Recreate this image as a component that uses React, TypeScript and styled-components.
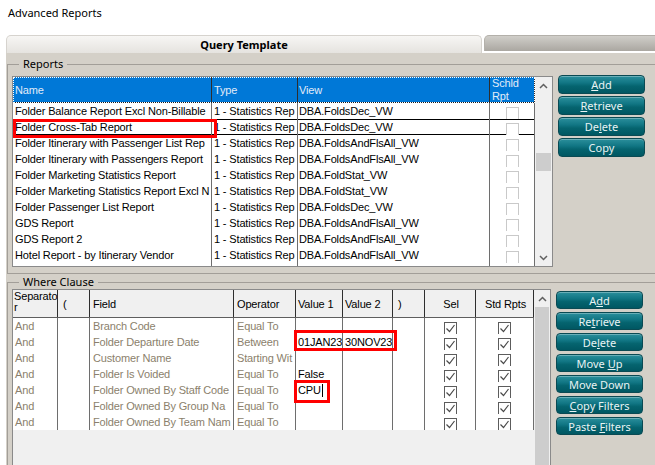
import React from "react";
import styled, { createGlobalStyle } from "styled-components";

const GlobalStyle = createGlobalStyle`
  html, body { margin: 0; padding: 0; background: #ffffff; }
  body { font-family: "Liberation Sans", Arial, sans-serif; }
  * { box-sizing: border-box; }
`;

const UI = `"Noto Sans", "Open Sans", sans-serif`;

const Window = styled.div`
  width: 655px;
  height: 465px;
  overflow: hidden;
  background: #ffffff;
  display: flex;
  flex-direction: column;
`;

const Title = styled.div`
  height: 35px;
  flex: none;
  padding: 5px 0 0 8px;
  font-family: ${UI};
  font-size: 11px;
  line-height: 16px;
  color: #000;
`;

const TabStrip = styled.div`
  display: flex;
  flex: none;
  height: 18px;
  padding-left: 6px;
  gap: 2px;
  align-items: flex-start;
`;

const Tab = styled.div<{ $active?: boolean }>`
  flex: ${(p) => (p.$active ? "0 0 476px" : "1 1 auto")};
  height: ${(p) => (p.$active ? "18px" : "16px")};
  margin-right: ${(p) => (p.$active ? "0" : "-10px")};
  border: 1px solid ${(p) => (p.$active ? "#d6d3ce" : "#b3b0aa")};
  border-bottom: none;
  border-radius: ${(p) => (p.$active ? "5px 5px 0 0" : "5px 0 0 0")};
  background: ${(p) =>
    p.$active
      ? "linear-gradient(#f7f6f4, #e5e3df)"
      : "linear-gradient(#d0cec9, #aaa7a1)"};
  display: flex;
  align-items: center;
  justify-content: center;
  font-family: ${UI};
  font-weight: 700;
  font-size: 11px;
  color: #000;
`;

const Panel = styled.div`
  flex: 1;
  margin-left: 6px;
  background: #d4d0c8;
  padding-top: 4px;
  display: flex;
  flex-direction: column;
  gap: 1px;
  min-height: 0;
`;

const Group = styled.fieldset<{ $pt: number; $pb: number }>`
  margin: 0 -30px 0 1px;
  padding: ${(p) => p.$pt}px 0 ${(p) => p.$pb}px 4px;
  border: 1px solid #a29e98;
  border-right: none;
  min-width: 0;
  flex: none;
`;

const Legend = styled.legend`
  margin-left: 7px;
  padding: 0 4px;
  font-family: ${UI};
  font-size: 11px;
  line-height: 14px;
  color: #000;
`;

const GroupBody = styled.div`
  display: flex;
  gap: 5px;
  align-items: flex-start;
`;

const GridFrame = styled.div<{ $w: number; $h: number }>`
  width: ${(p) => p.$w}px;
  height: ${(p) => p.$h}px;
  flex: none;
  border: 1px solid #8a8a8a;
  background: #ffffff;
  display: flex;
`;

const TableArea = styled.div<{ $bg: string }>`
  flex: 1;
  position: relative;
  background: ${(p) => p.$bg};
  display: flex;
  flex-direction: column;
  overflow: hidden;
  letter-spacing: -0.15px;
`;

const HeadRow = styled.div<{ $cols: string; $h: number; $blue?: boolean }>`
  display: grid;
  grid-template-columns: ${(p) => p.$cols};
  height: ${(p) => p.$h}px;
  flex: none;
  background: ${(p) => (p.$blue ? "#0078d7" : "#f0f0f0")};
  border-bottom: 1px solid ${(p) => (p.$blue ? "#1a1a1a" : "#5e5e5e")};
  color: ${(p) => (p.$blue ? "#e2ecf9" : "#000000")};
  ${(p) => (p.$blue ? "outline: 1px dotted #ffffff; outline-offset: -1px;" : "")}
`;

const HeadCell = styled.div<{ $center?: boolean; $top?: boolean; $pad?: number }>`
  border-right: 1px solid #2e2e2e;
  padding-left: ${(p) => (p.$pad ?? 2)}px;
  padding-top: ${(p) => (p.$top ? "1px" : "1px")};
  display: flex;
  align-items: ${(p) => (p.$top ? "flex-start" : "center")};
  justify-content: ${(p) => (p.$center ? "center" : "flex-start")};
  font-size: 11px;
  line-height: ${(p) => (p.$top ? "11px" : "13px")};
  overflow: hidden;
`;

const Row = styled.div<{ $cols: string; $current?: boolean; $fill?: boolean }>`
  display: grid;
  grid-template-columns: ${(p) => p.$cols};
  height: ${(p) => (p.$fill ? "auto" : "16px")};
  flex: ${(p) => (p.$fill ? "1" : "none")};
  background: #ffffff;
  ${(p) => (p.$current ? "box-shadow: inset 0 1px #000000, inset 0 -1px #000000;" : "")}
`;

const Cell = styled.div<{ $pad?: number; $center?: boolean; $muted?: boolean }>`
  border-right: 1px solid #6e6e6e;
  padding-left: ${(p) => (p.$center ? 0 : p.$pad ?? 2)}px;
  white-space: nowrap;
  overflow: hidden;
  font-size: 11px;
  line-height: 16px;
  color: ${(p) => (p.$muted ? "#8b7f6c" : "#000000")};
  display: flex;
  align-items: ${(p) => (p.$center ? "flex-start" : "center")};
  justify-content: ${(p) => (p.$center ? "center" : "flex-start")};
`;

const Box = styled.span<{ $on?: boolean }>`
  width: 13px;
  height: 13px;
  margin-top: 4px;
  flex: none;
  border: 1px solid ${(p) => (p.$on ? "#5c5c5c" : "#c9c9c9")};
  background: #ffffff;
  display: inline-flex;
  align-items: center;
  justify-content: center;
`;

const Mark = styled.div<{ $x: number; $y: number; $w: number; $h: number }>`
  position: absolute;
  left: ${(p) => p.$x}px;
  top: ${(p) => p.$y}px;
  width: ${(p) => p.$w}px;
  height: ${(p) => p.$h}px;
  border: 3px solid #ff0000;
  pointer-events: none;
`;

const Caret = styled.span`
  display: inline-block;
  width: 1px;
  height: 13px;
  margin-left: 1px;
  background: #000000;
`;

const VScroll = styled.div<{ $w: number }>`
  width: ${(p) => p.$w}px;
  flex: none;
  background: #f0f0f0;
  display: flex;
  flex-direction: column;
`;

const ScrollArrow = styled.div`
  height: 17px;
  flex: none;
  display: flex;
  align-items: center;
  justify-content: center;
`;

const ScrollTrack = styled.div`
  flex: 1;
  display: flex;
  flex-direction: column;
  padding: 0 1px;
`;

const Thumb = styled.div<{ $offset: number; $h?: number }>`
  margin-top: ${(p) => p.$offset}px;
  height: ${(p) => (p.$h ? `${p.$h}px` : "auto")};
  flex: ${(p) => (p.$h ? "none" : "1")};
  background: #cdcdcd;
`;

const ButtonCol = styled.div<{ $gap: number; $mt: number }>`
  display: flex;
  flex-direction: column;
  gap: ${(p) => p.$gap}px;
  margin-top: ${(p) => p.$mt}px;
  width: 87px;
  flex: none;
`;

const TealButton = styled.button<{ $h: number }>`
  display: block;
  height: ${(p) => p.$h}px;
  width: 87px;
  padding: 0;
  border-radius: 4px;
  border: 1px solid #0a4a53;
  background: linear-gradient(to bottom, #2b8f9c 0%, #117684 40%, #05646f 60%, #005762 100%);
  box-shadow: inset 0 1px 0 rgba(255, 255, 255, 0.3);
  color: #e8f3f4;
  font-family: ${UI};
  font-size: 11px;
  line-height: ${(p) => p.$h - 3}px;
  text-align: center;
  white-space: pre;
  cursor: default;
  u {
    text-decoration: underline;
    text-underline-offset: 1px;
  }
`;

const Chevron = ({ down }: { down?: boolean }) => (
  <svg width="9" height="6" viewBox="0 0 9 6">
    <polyline
      points={down ? "1,1 4.5,4.5 8,1" : "1,5 4.5,1.5 8,5"}
      fill="none"
      stroke="#606060"
      strokeWidth="1.5"
    />
  </svg>
);

const Check = () => (
  <svg width="11" height="11" viewBox="0 0 11 11">
    <polyline points="1.5,5.5 4.5,8.5 9.5,2" fill="none" stroke="#4a4a4a" strokeWidth="1.2" />
  </svg>
);

const R_COLS = "199px 86px 192px 45px";
const W_COLS = "45px 32px 144px 62px 47px 50px 32px 51px 58px";

const reports: [string, string, string][] = [
  ["Folder Balance Report Excl Non-Billable", "1 - Statistics Rep", "DBA.FoldsDec_VW"],
  ["Folder Cross-Tab Report", "1 - Statistics Rep", "DBA.FoldsDec_VW"],
  ["Folder Itinerary with Passenger List Rep", "1 - Statistics Rep", "DBA.FoldsAndFlsAll_VW"],
  ["Folder Itinerary with Passengers Report", "1 - Statistics Rep", "DBA.FoldsAndFlsAll_VW"],
  ["Folder Marketing Statistics Report", "1 - Statistics Rep", "DBA.FoldStat_VW"],
  ["Folder Marketing Statistics Report Excl N", "1 - Statistics Rep", "DBA.FoldStat_VW"],
  ["Folder Passenger List Report", "1 - Statistics Rep", "DBA.FoldsDec_VW"],
  ["GDS Report", "1 - Statistics Rep", "DBA.FoldsAndFlsAll_VW"],
  ["GDS Report 2", "1 - Statistics Rep", "DBA.FoldsAndFlsAll_VW"],
  ["Hotel Report - by Itinerary Vendor", "1 - Statistics Rep", "DBA.FoldsAndFlsAll_VW"],
];

type WRow = { field: string; op: string; v1?: string; v2?: string; caret?: boolean };
const filters: WRow[] = [
  { field: "Branch Code", op: "Equal To" },
  { field: "Folder Departure Date", op: "Between", v1: "01JAN23", v2: "30NOV23" },
  { field: "Customer Name", op: "Starting Wit" },
  { field: "Folder Is Voided", op: "Equal To", v1: "False" },
  { field: "Folder Owned By Staff Code", op: "Equal To", v1: "CPU", caret: true },
  { field: "Folder Owned By Group Na", op: "Equal To" },
  { field: "Folder Owned By Team Nam", op: "Equal To" },
];

export default function App() {
  return (
    <>
      <GlobalStyle />
      <Window>
        <Title>Advanced Reports</Title>
        <TabStrip>
          <Tab $active>Query Template</Tab>
          <Tab />
        </TabStrip>
        <Panel>
          <Group $pt={5} $pb={6}>
            <Legend>Reports</Legend>
            <GroupBody>
              <GridFrame $w={541} $h={191}>
                <TableArea $bg="#ffffff">
                  <HeadRow $cols={R_COLS} $h={26} $blue>
                    <HeadCell>Name</HeadCell>
                    <HeadCell>Type</HeadCell>
                    <HeadCell $pad={1}>View</HeadCell>
                    <HeadCell>Schld Rpt</HeadCell>
                  </HeadRow>
                  {reports.map(([name, type, view], i) => (
                    <Row key={name} $cols={R_COLS} $current={i === 1}>
                      <Cell>{name}</Cell>
                      <Cell>{type}</Cell>
                      <Cell $pad={1}>{view}</Cell>
                      <Cell $center>
                        <Box />
                      </Cell>
                    </Row>
                  ))}
                  <Row $cols={R_COLS} $fill>
                    <Cell />
                    <Cell />
                    <Cell />
                    <Cell />
                  </Row>
                  <Mark $x={0} $y={42} $w={204} $h={19} />
                </TableArea>
                <VScroll $w={17}>
                  <ScrollArrow>
                    <Chevron />
                  </ScrollArrow>
                  <ScrollTrack>
                    <Thumb $offset={59} $h={18} />
                  </ScrollTrack>
                  <ScrollArrow>
                    <Chevron down />
                  </ScrollArrow>
                </VScroll>
              </GridFrame>
              <ButtonCol $gap={2} $mt={-1}>
                <TealButton $h={19}>
                  <u>A</u>dd
                </TealButton>
                <TealButton $h={19}>
                  <u>R</u>etrieve
                </TealButton>
                <TealButton $h={19}>
                  De<u>l</u>ete
                </TealButton>
                <TealButton $h={19}>Copy</TealButton>
              </ButtonCol>
            </GroupBody>
          </Group>
          <Group $pt={0} $pb={6}>
            <Legend>Where Clause</Legend>
            <GroupBody>
              <GridFrame $w={539} $h={200}>
                <TableArea $bg="#f0f0f0">
                  <HeadRow $cols={W_COLS} $h={28}>
                    <HeadCell $top $pad={1}>
                      Separato
                      <br />
                      r
                    </HeadCell>
                    <HeadCell $pad={5}>(</HeadCell>
                    <HeadCell $pad={3}>Field</HeadCell>
                    <HeadCell $pad={3}>Operator</HeadCell>
                    <HeadCell $pad={2}>Value 1</HeadCell>
                    <HeadCell $pad={2}>Value 2</HeadCell>
                    <HeadCell $pad={5}>)</HeadCell>
                    <HeadCell $center>Sel</HeadCell>
                    <HeadCell $center>Std Rpts</HeadCell>
                  </HeadRow>
                  {filters.map((f) => (
                    <Row key={f.field} $cols={W_COLS}>
                      <Cell $muted $pad={2}>
                        And
                      </Cell>
                      <Cell />
                      <Cell $muted $pad={3}>
                        {f.field}
                      </Cell>
                      <Cell $muted $pad={3}>
                        {f.op}
                      </Cell>
                      <Cell $pad={2}>
                        {f.v1}
                        {f.caret && <Caret />}
                      </Cell>
                      <Cell $pad={2}>{f.v2}</Cell>
                      <Cell />
                      <Cell $center>
                        <Box $on>
                          <Check />
                        </Box>
                      </Cell>
                      <Cell $center>
                        <Box $on>
                          <Check />
                        </Box>
                      </Cell>
                    </Row>
                  ))}
                  <Mark $x={281} $y={40} $w={103} $h={21} />
                  <Mark $x={281} $y={90} $w={36} $h={23} />
                </TableArea>
                <VScroll $w={16}>
                  <ScrollArrow>
                    <Chevron />
                  </ScrollArrow>
                  <ScrollTrack>
                    <Thumb $offset={0} />
                  </ScrollTrack>
                </VScroll>
              </GridFrame>
              <ButtonCol $gap={3} $mt={2}>
                <TealButton $h={18}>
                  A<u>d</u>d
                </TealButton>
                <TealButton $h={18}>
                  Re<u>t</u>rieve
                </TealButton>
                <TealButton $h={18}>
                  De<u>l</u>ete
                </TealButton>
                <TealButton $h={18}>
                  {"Move "}
                  <u>U</u>p
                </TealButton>
                <TealButton $h={18}>Move Down</TealButton>
                <TealButton $h={18}>
                  <u>C</u>
                  {"opy Filters"}
                </TealButton>
                <TealButton $h={18}>
                  {"Paste "}
                  <u>F</u>ilters
                </TealButton>
              </ButtonCol>
            </GroupBody>
          </Group>
        </Panel>
      </Window>
    </>
  );
}
